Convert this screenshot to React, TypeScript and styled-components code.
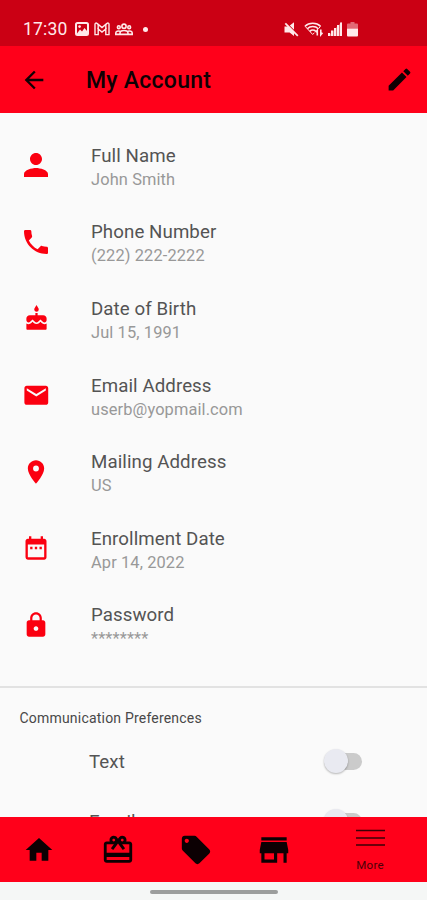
import React from 'react';
import styled, { createGlobalStyle } from 'styled-components';
import type { IconType } from 'react-icons';
import {
  MdArrowBack,
  MdCake,
  MdDateRange,
  MdEdit,
  MdEmail,
  MdHome,
  MdLocalOffer,
  MdLocationOn,
  MdLock,
  MdPerson,
  MdPhone,
  MdRedeem,
  MdStore,
} from 'react-icons/md';

const GlobalStyle = createGlobalStyle`
  * { box-sizing: border-box; }
  body { margin: 0; background: #fafafa; font-family: Roboto, sans-serif; }
`;

const Screen = styled.div`
  display: flex;
  flex-direction: column;
  width: 427px;
  height: 900px;
  overflow: hidden;
  background: #fafafa;
`;

const StatusBar = styled.div`
  display: flex;
  flex: none;
  align-items: center;
  justify-content: space-between;
  height: 46px;
  padding: 12px 69.5px 0 23px;
  background: #cb0014;
  color: #ffe9ea;
`;

const StatusGroup = styled.div<{ $gap: number }>`
  display: flex;
  align-items: center;
  gap: ${(p) => p.$gap}px;
  svg { display: block; }
`;

const Clock = styled.span`
  width: 46px;
  margin-right: 1px;
  font-size: 17.5px;
  line-height: 20px;
  letter-spacing: 0.2px;
`;

const Dot = styled.i`
  width: 5px;
  height: 5px;
  margin-left: 5px;
  border-radius: 50%;
  background: currentColor;
`;

const Header = styled.header`
  display: flex;
  flex: none;
  align-items: center;
  height: 66.5px;
  padding: 1px 13.5px 0 19.5px;
  background: #ff001a;
  color: #100004;
`;

const Title = styled.h1`
  flex: 1;
  margin: 3px 0 0 38.5px;
  font-size: 23px;
  font-weight: 500;
  line-height: 28px;
  letter-spacing: 0.25px;
`;

const Content = styled.main`
  flex: 1;
  min-height: 0;
  overflow: hidden;
`;

const Details = styled.section`
  height: 575.5px;
  padding-top: 14.6px;
  border-bottom: 2px solid #e2e2e2;
`;

const DetailRow = styled.div`
  display: flex;
  align-items: center;
  height: 76.6px;
`;

const IconSlot = styled.div`
  display: flex;
  justify-content: center;
  width: 72px;
  margin-right: 19px;
  color: #fb0010;
`;

const DetailText = styled.div`
  display: flex;
  flex-direction: column;
  padding-top: 5px;
`;

const Label = styled.span`
  color: #545454;
  font-size: 18.7px;
  line-height: 24px;
  letter-spacing: 0.08px;
`;

const Value = styled.span`
  color: #989898;
  font-size: 16.4px;
  line-height: 24px;
  letter-spacing: 0.12px;
`;

const SectionTitle = styled.h2`
  margin: 21px 0 0 19.5px;
  color: #484848;
  font-size: 14px;
  font-weight: 400;
  line-height: 18px;
  letter-spacing: 0.2px;
`;

const PreferenceRow = styled.div`
  display: flex;
  align-items: center;
  justify-content: space-between;
  height: 60px;
  margin: 4px 65px 0 89px;
  & + & { margin-top: 0; }
`;

const PreferenceLabel = styled(Label)`
  padding-top: 2px;
`;

const Switch = styled.span`
  display: flex;
  align-items: center;
  width: 33px;
  height: 17px;
  border-radius: 9px;
  background: #cbcbcb;
`;

const Knob = styled.span`
  flex: none;
  width: 24px;
  height: 24px;
  margin-left: -5px;
  border-radius: 50%;
  background: #e9eaf1;
  box-shadow: 0 1px 2px rgba(0, 0, 0, 0.28);
`;

const BottomNav = styled.nav`
  display: grid;
  flex: none;
  grid-template-columns: 78.4px 78.4px 78.4px 78.4px 113px;
  align-items: center;
  height: 65.5px;
  padding-top: 1.5px;
  background: #ff001a;
  color: #0c0003;
`;

const NavItem = styled.div`
  display: flex;
  flex-direction: column;
  align-items: center;
`;

const MoreLabel = styled.span`
  margin-top: 12px;
  font-size: 11.5px;
  line-height: 14px;
  letter-spacing: 0.3px;
  color: #4a0008;
`;

const GestureArea = styled.div`
  display: flex;
  flex: none;
  justify-content: center;
  height: 18px;
  padding: 7.5px 0 0 1px;
  background: #f5f7f6;
`;

const GestureBar = styled.div`
  width: 128px;
  height: 4.5px;
  border-radius: 3px;
  background: #9c9e9d;
`;

const details: { icon: IconType; size: number; label: string; value: string }[] = [
  { icon: MdPerson, size: 36, label: 'Full Name', value: 'John Smith' },
  { icon: MdPhone, size: 32, label: 'Phone Number', value: '(222) 222-2222' },
  { icon: MdCake, size: 27, label: 'Date of Birth', value: 'Jul 15, 1991' },
  { icon: MdEmail, size: 28.6, label: 'Email Address', value: 'userb@yopmail.com' },
  { icon: MdLocationOn, size: 28, label: 'Mailing Address', value: 'US' },
  { icon: MdDateRange, size: 28, label: 'Enrollment Date', value: 'Apr 14, 2022' },
  { icon: MdLock, size: 28, label: 'Password', value: '********' },
];

const navIcons: { icon: IconType; size: number }[] = [
  { icon: MdHome, size: 32 },
  { icon: MdRedeem, size: 34 },
  { icon: MdLocalOffer, size: 34 },
  { icon: MdStore, size: 38 },
];

const PictureIcon = () => (
  <svg width="14" height="14" viewBox="0 0 14 14">
    <rect x="1" y="1" width="12" height="12" rx="1.5" fill="none" stroke="currentColor" strokeWidth="2" />
    <path d="M2 11.5 5 7.5l2 2L9.5 6 12 9v3H2z" fill="currentColor" />
    <circle cx="4.6" cy="4.6" r="1.3" fill="currentColor" />
  </svg>
);

const MailIcon = () => (
  <svg width="16" height="14" viewBox="0 0 16 14" fill="none" stroke="currentColor" strokeWidth="1.4">
    <path d="M1 12.6V2.2c0-1.1 1.2-1.5 2-.8L8 5.5l5-4.1c.8-.7 2-.3 2 .8v10.4h-3.2V7L8 10 4.2 7v5.6z" />
    <path d="M4.2 2.6V7M11.8 2.6V7" />
  </svg>
);

const PeopleIcon = () => (
  <svg width="18" height="13" viewBox="0 0 18 13" fill="none" stroke="currentColor" strokeWidth="1.6">
    <circle cx="9" cy="3.2" r="2.1" />
    <circle cx="3.8" cy="4.2" r="1.4" />
    <circle cx="14.2" cy="4.2" r="1.4" />
    <path d="M5 11.4V10c0-3.4 8-3.4 8 0v1.4zM5 11.4H.8V9.9c0-1.7 2-2.2 4.2-1.7M13 11.4h4.2V9.9c0-1.7-2-2.2-4.2-1.7" />
  </svg>
);

const MuteIcon = () => (
  <svg width="15" height="15" viewBox="0 0 15 15" fill="currentColor">
    <path d="M.5 4.5h4L10 10v4l-4.400-3.500H.5zM5.800 3.600 10 .3v7.500z" />
    <path d="m1.300 1.300 12.500 12.500" stroke="currentColor" strokeWidth="1.8" />
  </svg>
);

const WifiIcon = () => (
  <svg width="20" height="15" viewBox="0 0 20 15" fill="none" stroke="currentColor" strokeWidth="1.6">
    <path d="M1 4.2c4-4 11.5-4 15.5 0M3.3 6.8c3-3 8-3 11 0M5.8 9.3c1.700-1.600 4.300-1.600 6 0" />
    <path d="M1 4.2 8.7 12.5l1.700-1.800M16.5 4.2l-2 2.500" strokeWidth="1" />
    <path d="M13.3 13.5V8.3l-1.700 2M16.8 7.5v5.300l1.700-2" />
  </svg>
);

const SignalIcon = () => (
  <svg width="14" height="14" viewBox="0 0 14 14" fill="currentColor">
    <path d="M0 11h2v3H0zM3 8.5h2V14H3zM6 6h2v8H6zM9 3h2v11H9zM12 .5h2V14h-2z" />
    <path d="M0 14 14 0v14z" opacity=".45" />
  </svg>
);

const BatteryIcon = () => (
  <svg width="11" height="15" viewBox="0 0 11 15" fill="currentColor">
    <path d="M3.5 0h4v1.5H10q1 0 1 1v4H0v-4q0-1 1-1h2.500z" opacity=".45" />
    <path d="M0 6.5h11v7q0 1-1 1H1q-1 0-1-1z" />
  </svg>
);

const MenuIcon = () => (
  <svg width="29" height="18" viewBox="0 0 29 18" fill="none" stroke="#3a0006" strokeWidth="1.7">
    <path d="M0 2.500h29M0 10h29M0 17h29" />
  </svg>
);

export default function App() {
  return (
    <>
      <GlobalStyle />
      <Screen>
        <StatusBar>
          <StatusGroup $gap={5}>
            <Clock>17:30</Clock>
            <PictureIcon />
            <MailIcon />
            <PeopleIcon />
            <Dot />
          </StatusGroup>
          <StatusGroup $gap={4.5}>
            <MuteIcon />
            <WifiIcon />
            <SignalIcon />
            <BatteryIcon />
          </StatusGroup>
        </StatusBar>
        <Header>
          <MdArrowBack size={28} />
          <Title>My Account</Title>
          <MdEdit size={29} />
        </Header>
        <Content>
          <Details>
            {details.map(({ icon: Icon, size, label, value }) => (
              <DetailRow key={label}>
                <IconSlot>
                  <Icon size={size} />
                </IconSlot>
                <DetailText>
                  <Label>{label}</Label>
                  <Value>{value}</Value>
                </DetailText>
              </DetailRow>
            ))}
          </Details>
          <SectionTitle>Communication Preferences</SectionTitle>
          {['Text', 'Email'].map((name) => (
            <PreferenceRow key={name}>
              <PreferenceLabel>{name}</PreferenceLabel>
              <Switch>
                <Knob />
              </Switch>
            </PreferenceRow>
          ))}
        </Content>
        <BottomNav>
          {navIcons.map(({ icon: Icon, size }, index) => (
            <NavItem key={index}>
              <Icon size={size} />
            </NavItem>
          ))}
          <NavItem>
            <MenuIcon />
            <MoreLabel>More</MoreLabel>
          </NavItem>
        </BottomNav>
        <GestureArea>
          <GestureBar />
        </GestureArea>
      </Screen>
    </>
  );
}
